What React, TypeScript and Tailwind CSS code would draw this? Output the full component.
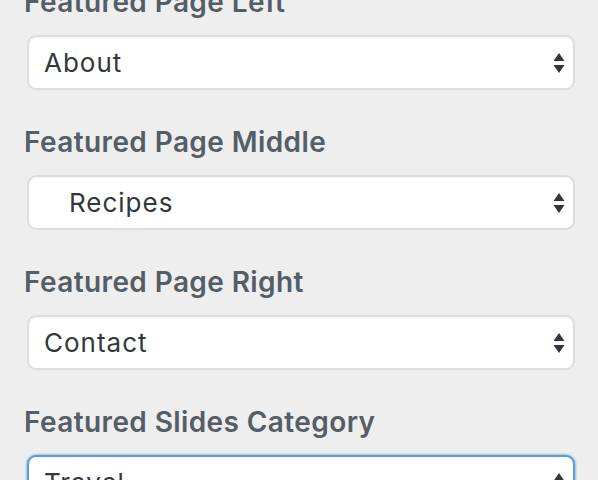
import React from 'react';

type Control = {
  label: string;
  value: string;
  focused?: boolean;
};

const controls: Control[] = [
  { label: 'Featured Page Left', value: 'About' },
  { label: 'Featured Page Middle', value: '\u00a0\u00a0\u00a0Recipes' },
  { label: 'Featured Page Right', value: 'Contact' },
  { label: 'Featured Slides Category', value: 'Travel', focused: true },
];

const Arrows = () => (
  <svg width="12" height="22" viewBox="0 0 12 22" className="shrink-0">
    <path d="M6 1 L11.5 9 L0.5 9 Z" fill="#32373c" />
    <path d="M6 21 L11.5 13 L0.5 13 Z" fill="#32373c" />
  </svg>
);

export default function App() {
  return (
    <div
      className="w-[598px] h-[480px] overflow-hidden bg-[#eeeeee]"
      style={{ fontFamily: 'Inter, "Liberation Sans", sans-serif' }}
    >
      <div className="-mt-[16px] pl-[24px] pr-[23px] flex flex-col">
        {controls.map((c, i) => (
          <div key={i} className={i === 0 ? '' : 'mt-[34px]'}>
            {/* label */}
            <div className="h-[36px] leading-[36px] text-[28px] tracking-[0.4px] font-semibold text-[#555d66] whitespace-nowrap">
              {c.label}
            </div>
            <div
              className={
                'mt-[15px] ml-[3px] h-[55px] rounded-[9px] bg-white flex items-center justify-between pl-[15px] pr-[8px] ' +
                (c.focused
                  ? 'border-2 border-[#5b9dd9] shadow-[0_0_3px_rgba(30,140,190,0.8)]'
                  : 'border-2 border-[#dddddd] shadow-[inset_0_1px_2px_rgba(0,0,0,0.07)]')
              }
            >
              <span className="text-[26px] tracking-[1px] text-[#32373c] whitespace-pre">{c.value}</span>
              <Arrows />
            </div>
          </div>
        ))}
      </div>
    </div>
  );
}
